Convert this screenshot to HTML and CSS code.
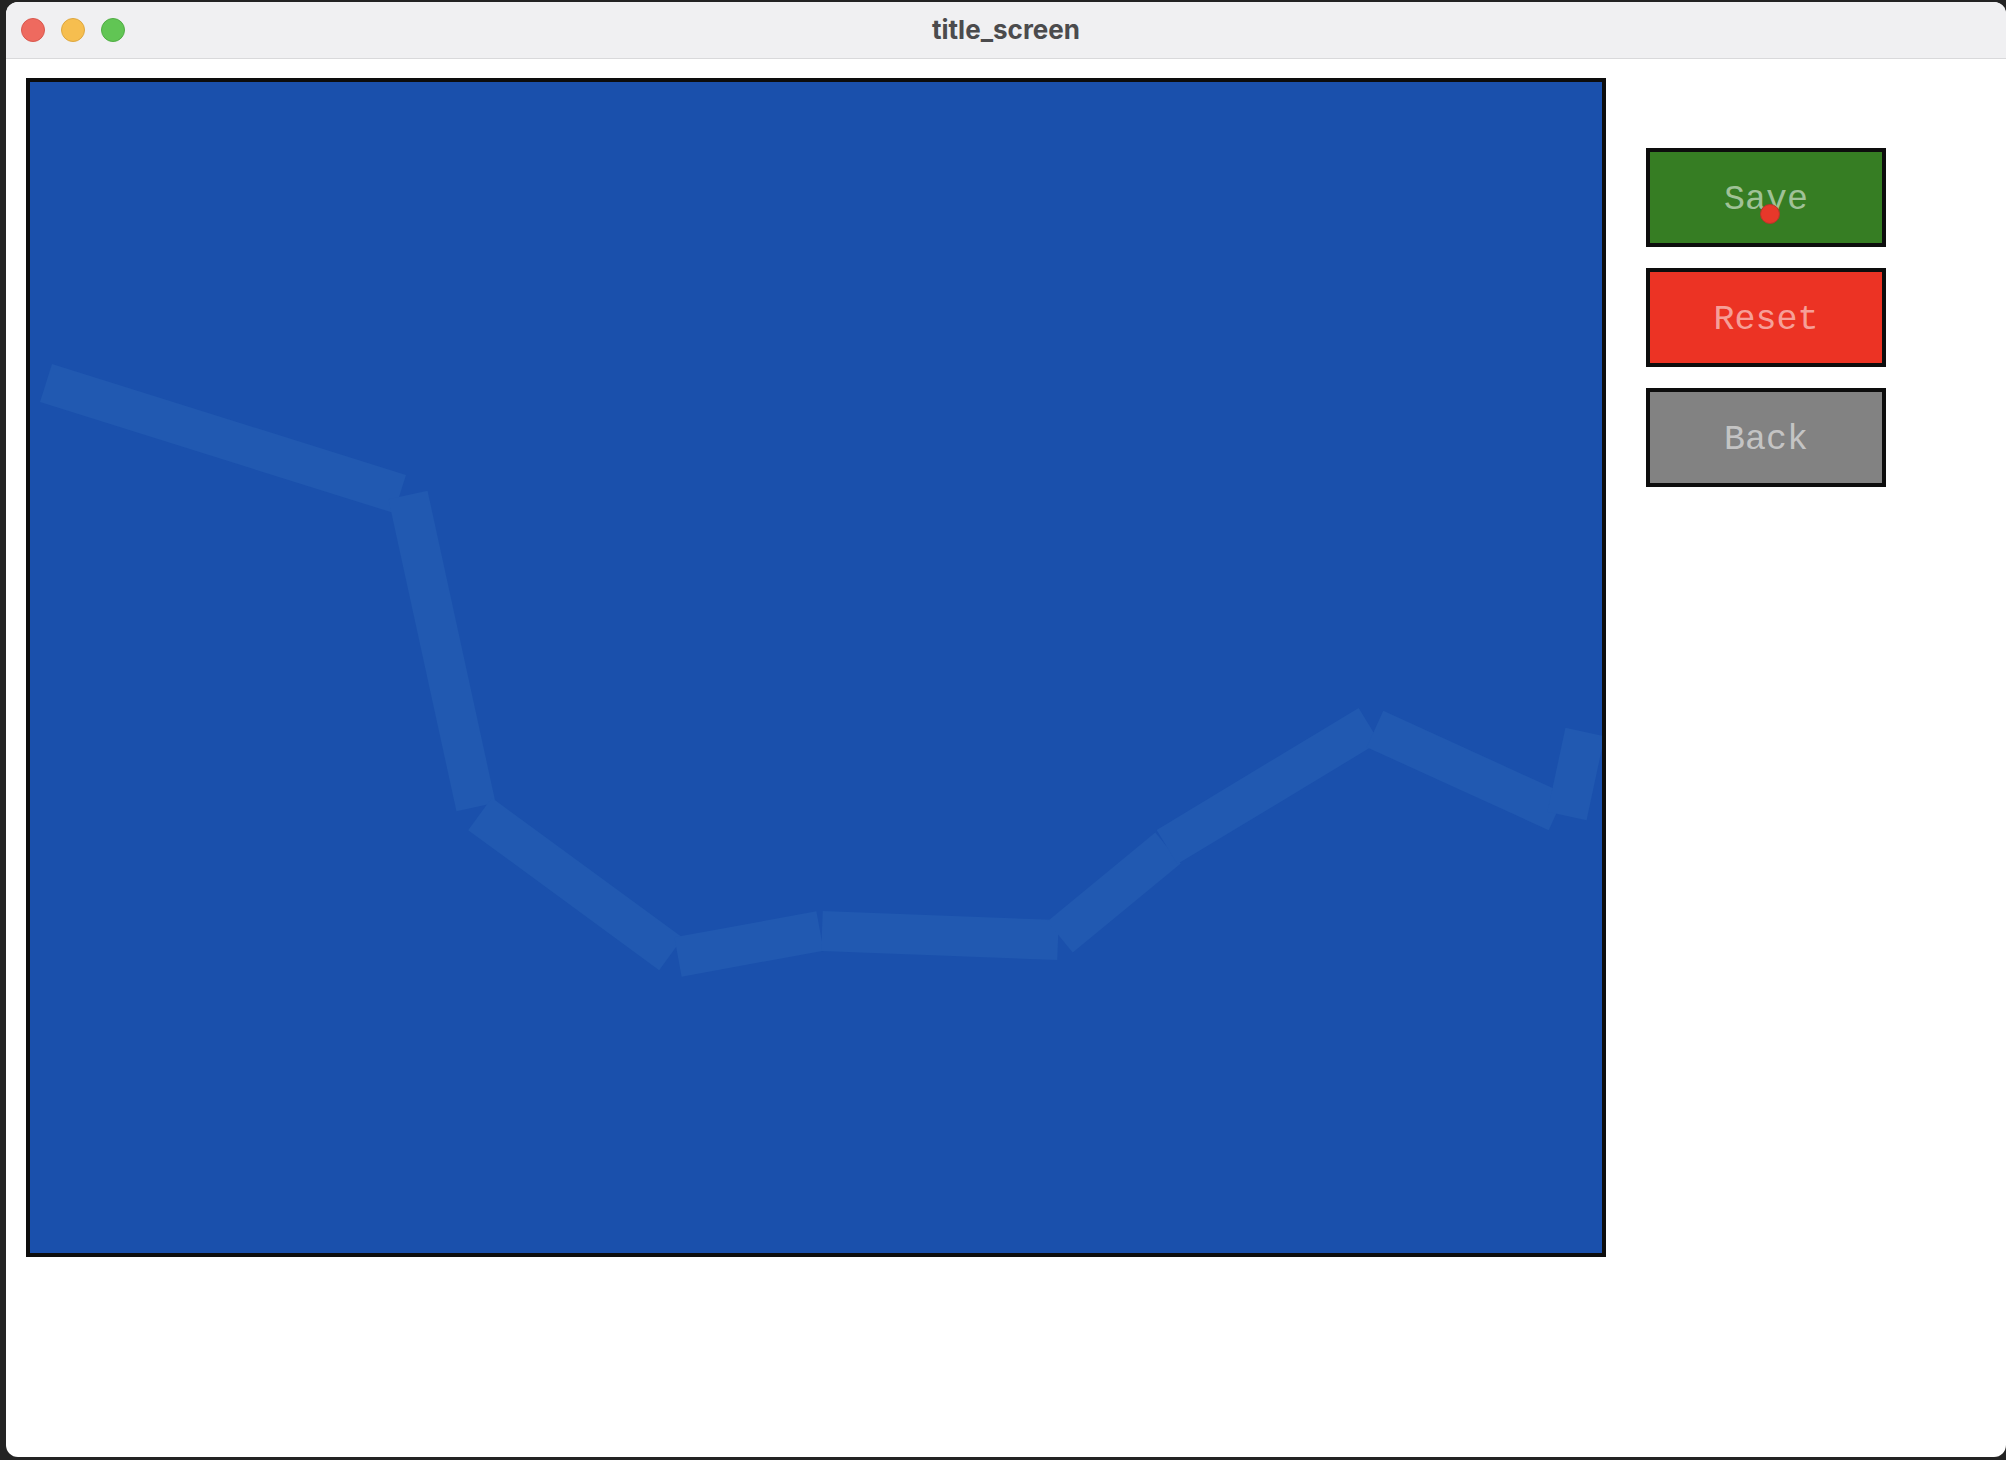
FILE: index.html
```html
<!DOCTYPE html>
<html>
<head>
<meta charset="utf-8">
<title>title_screen</title>
<link rel="stylesheet" href="styles.css">
</head>
<body>
<div class="window">
  <div class="titlebar">
    <div class="lights">
      <span class="light close"></span>
      <span class="light min"></span>
      <span class="light max"></span>
    </div>
    <div class="title">title_screen</div>
  </div>
  <div class="content">
    <div class="canvas">
      <svg class="plot" viewBox="30 82 1572 1171" width="1572" height="1171">
        <g class="seg">
          <line x1="46" y1="383" x2="400" y2="494"/>
          <line x1="408" y1="495" x2="476" y2="807"/>
          <line x1="480" y1="814" x2="671" y2="954"/>
          <line x1="678" y1="957" x2="820" y2="931"/>
          <line x1="822" y1="931" x2="1058" y2="940"/>
          <line x1="1060" y1="937" x2="1168" y2="848"/>
          <line x1="1167" y1="847" x2="1369" y2="725"/>
          <line x1="1375" y1="729" x2="1557" y2="812"/>
          <line x1="1585" y1="732" x2="1567" y2="816"/>
        </g>
      </svg>
    </div>
    <div class="buttons">
      <div class="btn save">Save<span class="dot"></span></div>
      <div class="btn reset">Reset</div>
      <div class="btn back">Back</div>
    </div>
  </div>
</div>
</body>
</html>
```

FILE: styles.css
```css
html, body {
  margin: 0;
  padding: 0;
  background: #232323;
  width: 2006px;
  height: 1460px;
  overflow: hidden;
}

.window {
  margin: 2px 0 0 6px;
  width: 2000px;
  height: 1455px;
  background: #ffffff;
  border-radius: 12px;
  overflow: hidden;
  display: flex;
  flex-direction: column;
}

.titlebar {
  position: relative;
  height: 56px;
  flex: none;
  background: #f0f0f2;
  border-bottom: 1px solid #d9d9db;
  display: flex;
  align-items: center;
  justify-content: center;
}

.lights {
  position: absolute;
  left: 15px;
  top: 16px;
  display: flex;
  gap: 16px;
}

.light {
  width: 24px;
  height: 24px;
  border-radius: 50%;
  box-sizing: border-box;
}

.close { background: #ee6a5f; border: 1px solid #d9584e; }
.min { background: #f6be4f; border: 1px solid #dea73f; }
.max { background: #61c554; border: 1px solid #50ad44; }

.title {
  font-family: Inter, "Liberation Sans", sans-serif;
  font-weight: 700;
  font-size: 26px;
  color: #4b4b4d;
  margin-top: -2px;
}

.content {
  display: flex;
  align-items: flex-start;
  padding: 19px 20px;
}

.canvas {
  width: 1572px;
  height: 1171px;
  border: 4px solid #0d0d0d;
  background: #1a50ac;
  flex: none;
  overflow: hidden;
}

.plot {
  display: block;
}

.seg line {
  stroke: #2159b1;
  stroke-width: 40;
  stroke-linecap: butt;
}

.buttons {
  display: flex;
  flex-direction: column;
  gap: 21px;
  margin-left: 40px;
  margin-top: 70px;
}

.btn {
  position: relative;
  box-sizing: border-box;
  width: 240px;
  height: 99px;
  padding-top: 5px;
  border: 4px solid #0d0d0d;
  display: flex;
  align-items: center;
  justify-content: center;
  font-family: "Liberation Mono", "Courier New", monospace;
  font-size: 35px;
  color: rgba(255, 255, 255, 0.55);
}

.save { background: #367d23; }
.reset { background: #ec3324; }
.back { background: #828282; }

.dot {
  position: absolute;
  left: 110px;
  top: 52px;
  width: 18px;
  height: 18px;
  border-radius: 50%;
  background: #e7382a;
  border: 1px solid #b8342a;
}
```
